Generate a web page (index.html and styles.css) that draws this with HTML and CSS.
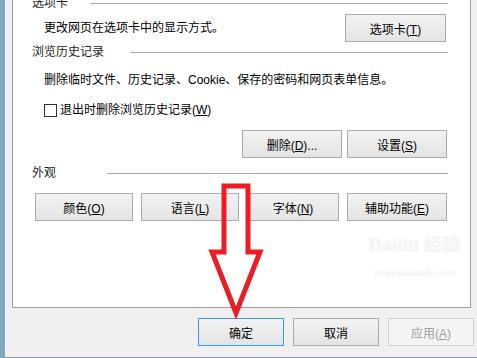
FILE: index.html
```html
<!DOCTYPE html>
<html lang="zh-CN">
<head>
  <meta charset="UTF-8">
  <title>Internet 选项</title>
  <link rel="stylesheet" href="styles.css">
</head>
<body>
  <div class="dialog">
    <div class="panel">
      <div class="group-head">
        <span>选项卡</span>
        <i class="rule rule-tabs"></i>
      </div>
      <div class="row-tabs">
        <p class="desc">更改网页在选项卡中的显示方式。</p>
        <button class="btn btn-tabs">选项卡(<u>T</u>)</button>
      </div>

      <div class="group-head head-history">
        <span>浏览历史记录</span>
        <i class="rule rule-history"></i>
      </div>
      <p class="desc desc-history">删除临时文件、历史记录、Cookie、保存的密码和网页表单信息。</p>
      <label class="check"><span class="box"></span><span>退出时删除浏览历史记录(<u>W</u>)</span></label>
      <div class="actions">
        <button class="btn">删除(<u>D</u>)...</button>
        <button class="btn">设置(<u>S</u>)</button>
      </div>

      <div class="group-head head-look">
        <span>外观</span>
        <i class="rule rule-look"></i>
      </div>
      <div class="looks">
        <button class="btn">颜色(<u>O</u>)</button>
        <button class="btn">语言(<u>L</u>)</button>
        <button class="btn">字体(<u>N</u>)</button>
        <button class="btn">辅助功能(<u>E</u>)</button>
      </div>
    </div>

    <div class="footer">
      <button class="btn btn-default">确定</button>
      <button class="btn">取消</button>
      <button class="btn" disabled>应用(<u>A</u>)</button>
    </div>
  </div>

  <!-- 标注箭头 -->
  <svg class="arrow" width="64" height="140" viewBox="205 180 64 140">
    <polygon points="224,186 248,186 248,252 260,252 236,313 212,252 224,252"
             fill="none" stroke="#ec1c24" stroke-width="5" stroke-linejoin="miter"/>
  </svg>

  <div class="watermark">
    <span class="wm-big">Baidu 经验</span>
    <span class="wm-small">jingyan.baidu.com</span>
  </div>
</body>
</html>
```

FILE: styles.css
```css
* {
  box-sizing: border-box;
}

body {
  margin: 0;
  height: 358px;
  overflow: hidden;
  background-color: #f0f0f0;
  border-left: 5px solid #7fa8bf;
  border-bottom: 1px solid #7b9db3;
  font-family: "Liberation Sans", "Noto Sans CJK SC", sans-serif;
  font-size: 12px;
  color: #000;
  position: relative;
}

.panel {
  margin: -10px 6px 0 7px;
  background: #fff;
  border: 1px solid #a0a0a0;
  padding: 5px 22px 86px 19px;
}

.group-head {
  display: flex;
  align-items: center;
  height: 14px;
  line-height: 14px;
  color: #1e1e1e;
}

.rule {
  flex: 1;
  height: 1px;
  background: #a8a8a8;
}

.rule-tabs { margin-left: 22px; }
.rule-history { margin-left: 26px; }
.rule-look { margin-left: 51px; }

.head-history { margin-top: 3px; }
.head-look { margin-top: 8px; }

.desc {
  margin: 0;
  padding-left: 12px;
  line-height: 14px;
}

.row-tabs {
  margin-top: 4px;
  height: 28px;
  display: flex;
  align-items: center;
  justify-content: space-between;
}

.desc-history {
  margin-top: 14px;
}

.check {
  margin-top: 16px;
  padding-left: 12px;
  height: 14px;
  display: flex;
  align-items: center;
  gap: 3px;
  line-height: 14px;
}

.box {
  width: 13px;
  height: 13px;
  border: 1px solid #333;
  background: #fff;
}

.btn {
  height: 28px;
  padding: 0;
  font: inherit;
  color: #000;
  border: 1px solid #acacac;
  background: linear-gradient(#f2f2f2, #e4e4e4);
  cursor: pointer;
}

.btn u {
  text-underline-offset: 1px;
}

.btn-tabs {
  width: 101px;
  margin-right: 2px;
}

.actions {
  margin-top: 13px;
  display: flex;
  justify-content: flex-end;
  gap: 5px;
  padding-right: 1px;
}

.actions .btn {
  width: 100px;
}

.looks {
  margin-top: 13px;
  margin-left: 3px;
  display: grid;
  grid-template-columns: 98px 98px 92px 100px;
  gap: 8px;
}

.footer {
  margin-top: 10px;
  display: flex;
  justify-content: flex-end;
  gap: 9px;
  padding-right: 3px;
}

.footer .btn {
  width: 86px;
}

.btn-default {
  border-color: #3399ff;
}

.btn:disabled {
  color: #a0a0a0;
  border-color: #d0d0d0;
  background: #f4f4f4;
  cursor: default;
}

.arrow {
  position: absolute;
  left: 200px;
  top: 180px;
}

/* 水印 */
.watermark {
  position: absolute;
  left: 364px;
  top: 230px;
  display: flex;
  flex-direction: column;
  align-items: center;
  white-space: nowrap;
  color: rgba(255, 255, 255, 0.7);
  text-shadow: 0 0 1px rgba(0, 0, 0, 0.12);
  pointer-events: none;
}

.wm-big {
  font-size: 18px;
  font-weight: bold;
}

.wm-small {
  font-family: "Liberation Serif", serif;
  font-size: 11px;
  margin-top: 10px;
}
```
